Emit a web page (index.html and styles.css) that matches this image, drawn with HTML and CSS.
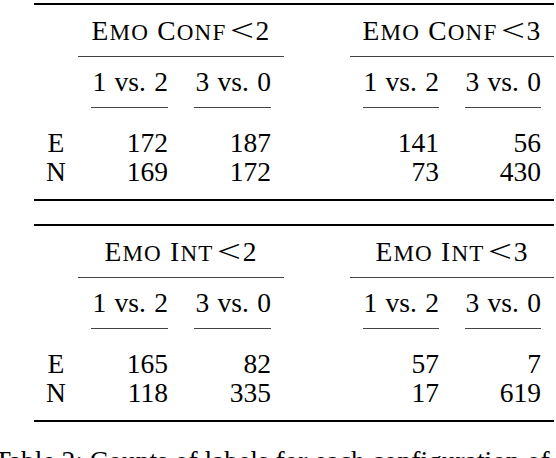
FILE: index.html
```html
<!DOCTYPE html>
<html>
<head>
<meta charset="utf-8">
<link rel="stylesheet" href="styles.css">
</head>
<body>
<div class="page">
  <div class="tbl">
    <div class="rule-thick"></div>
    <div class="grid head1">
      <div class="cell"></div>
      <div class="cell group">E<span class="sc">MO</span> C<span class="sc">ONF</span><span class="rel">&lt;</span>2</div>
      <div class="cell"></div>
      <div class="cell group">E<span class="sc">MO</span> C<span class="sc">ONF</span><span class="rel">&lt;</span>3</div>
    </div>
    <div class="grid mid">
      <div></div><div class="cmid"></div><div></div><div class="cmid"></div>
    </div>
    <div class="grid head2">
      <div class="cell"></div>
      <div class="cell num">1 vs. 2</div>
      <div class="cell num">3 vs. 0</div>
      <div class="cell"></div>
      <div class="cell num">1 vs. 2</div>
      <div class="cell num">3 vs. 0</div>
    </div>
    <div class="grid short">
      <div></div><div class="sr"></div><div class="sr"></div><div></div><div class="sr"></div><div class="sr"></div>
    </div>
    <div class="grid body">
      <div class="cell lab">E</div><div class="cell num">172</div><div class="cell num">187</div><div class="cell"></div><div class="cell num">141</div><div class="cell num">56</div>
      <div class="cell lab">N</div><div class="cell num">169</div><div class="cell num">172</div><div class="cell"></div><div class="cell num">73</div><div class="cell num">430</div>
    </div>
    <div class="rule-thick bottom"></div>
  </div>

  <div class="tbl second">
    <div class="rule-thick"></div>
    <div class="grid head1">
      <div class="cell"></div>
      <div class="cell group">E<span class="sc">MO</span> I<span class="sc">NT</span><span class="rel">&lt;</span>2</div>
      <div class="cell"></div>
      <div class="cell group">E<span class="sc">MO</span> I<span class="sc">NT</span><span class="rel">&lt;</span>3</div>
    </div>
    <div class="grid mid">
      <div></div><div class="cmid"></div><div></div><div class="cmid"></div>
    </div>
    <div class="grid head2">
      <div class="cell"></div>
      <div class="cell num">1 vs. 2</div>
      <div class="cell num">3 vs. 0</div>
      <div class="cell"></div>
      <div class="cell num">1 vs. 2</div>
      <div class="cell num">3 vs. 0</div>
    </div>
    <div class="grid short">
      <div></div><div class="sr"></div><div class="sr"></div><div></div><div class="sr"></div><div class="sr"></div>
    </div>
    <div class="grid body">
      <div class="cell lab">E</div><div class="cell num">165</div><div class="cell num">82</div><div class="cell"></div><div class="cell num">57</div><div class="cell num">7</div>
      <div class="cell lab">N</div><div class="cell num">118</div><div class="cell num">335</div><div class="cell"></div><div class="cell num">17</div><div class="cell num">619</div>
    </div>
    <div class="rule-thick bottom"></div>
  </div>

  <p class="caption">Table 2: Counts of labels for each configuration of the four settings. E</p>
</div>
</body>
</html>
```

FILE: styles.css
```css
html, body {
  margin: 0;
  padding: 0;
  background: #fff;
}
.page {
  width: 556px;
  height: 458px;
  overflow: hidden;
  font-family: "Liberation Serif", "Times New Roman", serif;
  font-size: 27.5px;
  color: #000;
}
.tbl {
  margin-left: 34px;
  width: 520px;
  padding-top: 3px;
}
.tbl.second {
  padding-top: 23px;
}
.rule-thick {
  height: 2px;
  background: #000;
}
.rule-thick.bottom {
  margin-top: 13px;
}
.grid {
  display: grid;
  grid-template-columns: 44px 103px 103px 66px 102px 102px;
}
.head1 {
  grid-template-columns: 44px 206px 66px 204px;
  height: 51px;
  line-height: 51px;
}
.group {
  text-align: center;
  white-space: nowrap;
  letter-spacing: 1.2px;
}
.sc {
  font-size: 0.84em;
}
.rel {
  display: inline-block;
  width: 24px;
  text-align: center;
  margin: 0 2px 0 3px;
  letter-spacing: 0;
  transform: scale(1.55, 1.15);
}
.mid {
  grid-template-columns: 44px 206px 66px 204px;
}
.cmid {
  border-top: 1px solid #444;
}
.head2 {
  height: 50px;
  line-height: 50px;
}
.num {
  text-align: right;
  padding-right: 13px;
  word-spacing: 1.5px;
  white-space: nowrap;
}
.short .sr {
  margin: 0 13px 0 13px;
  border-top: 1px solid #444;
}
.body {
  padding-top: 20px;
  line-height: 29px;
}
.lab {
  text-align: center;
}
.caption {
  margin: 0 0 0 -6px;
  padding-top: 24px;
  line-height: 30px;
  white-space: nowrap;
}
```
